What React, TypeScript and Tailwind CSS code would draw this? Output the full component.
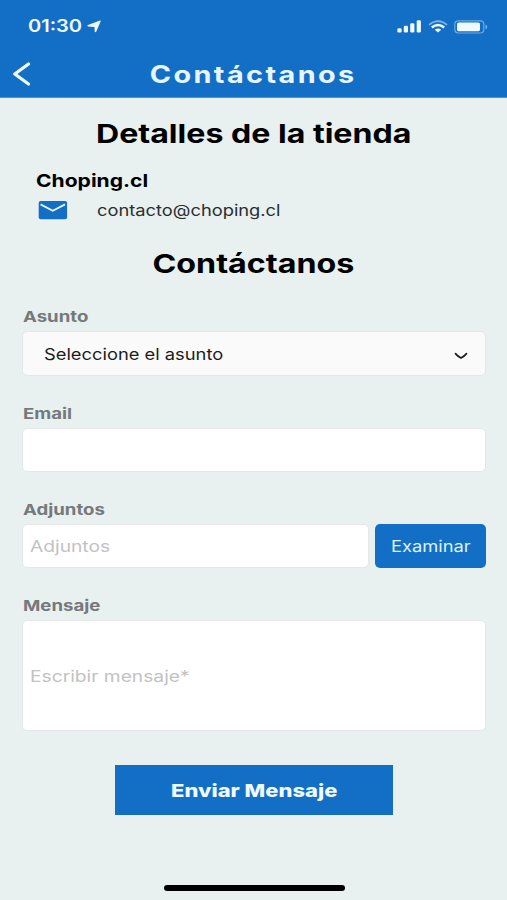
import React from 'react';

interface WideProps {
  children: React.ReactNode;
  className?: string;
}

// Text in the app's extended sans face
const Wide: React.FC<WideProps> = ({ children, className = 'origin-left scale-x-[1.2]' }) => (
  <span className={`inline-block whitespace-nowrap ${className}`}>{children}</span>
);

const StatusBar: React.FC = () => (
  <div className="flex h-[53px] items-center pl-7 pr-[19px] text-[#eefaff]">
    <div className="w-[59px] pt-px text-[17px] font-semibold">
      <Wide className="origin-left scale-x-[1.18]">01:30</Wide>
    </div>
    <svg className="h-[13px] w-[15px]" viewBox="0 0 15 13" fill="currentColor">
      <path d="M13 0.4 Q14 0.3 13.6 1.4 L9.2 11.8 Q8.2 12.8 7.7 11.5 L7.5 6.9 L1 6.4 Q-0.2 5.8 1 5.1 Z" />
    </svg>

    <div className="ml-auto flex items-center">
      <svg className="h-[13px] w-6" viewBox="0 0 24 13" fill="currentColor">
        <rect x="0.4" y="8.2" width="4.2" height="4.3" rx="1.2" />
        <rect x="6.8" y="5.8" width="4.2" height="6.7" rx="1.2" />
        <rect x="13.2" y="3.2" width="4.2" height="9.3" rx="1.2" />
        <rect x="19.7" y="0.3" width="4.2" height="12.2" rx="1.2" />
      </svg>
      <svg className="ml-[7px] h-[13px] w-5" viewBox="0 0 20 13" fill="none" stroke="currentColor">
        <path d="M1 4.8 Q10 -2.6 19 4.8" strokeWidth="1.6" opacity="0.5" />
        <path d="M3.8 7.4 Q10 2.6 16.2 7.4" strokeWidth="2.5" />
        <path d="M6.8 9.8 Q10 7.2 13.2 9.8 L10 12.6 Z" fill="currentColor" stroke="none" />
      </svg>
      <svg className="ml-[6px] h-[14px] w-[34px]" viewBox="0 0 34 14" fill="none">
        <rect x="0.8" y="0.8" width="29" height="12.2" rx="3.4" stroke="#6fa7df" strokeWidth="1.2" />
        <rect x="3" y="2.6" width="23" height="8.6" rx="1.6" fill="currentColor" />
        <path d="M31.4 4.6 Q33.4 5.2 33.4 6.9 Q33.4 8.6 31.4 9.2 Z" fill="#6fa7df" />
      </svg>
    </div>
  </div>
);

const Header: React.FC = () => (
  <header className="h-[98px] border-b border-[#4c91d3] bg-[#136fc6]">
    <StatusBar />
    <div className="flex h-[42px] items-center pl-3">
      <svg className="h-6 w-[19px]" viewBox="0 0 19 24" fill="none" stroke="#eefaff" strokeWidth="3.2" strokeLinecap="round" strokeLinejoin="round">
        <path d="M16.5 2 L2.8 12 L16.5 22" />
      </svg>
      <h1 className="flex-1 pr-[31px] pt-px text-center text-[24px] font-bold leading-none text-[#e6f6ff]">
        <Wide className="scale-x-[1.2] tracking-[2px]">Contáctanos</Wide>
      </h1>
    </div>
  </header>
);

const Label: React.FC<WideProps> = ({ children }) => (
  <div className="flex h-[30px] items-center pl-px pt-[2px] text-[15px] font-bold text-[#75797b]">
    <Wide className="origin-left scale-x-[1.24]">{children}</Wide>
  </div>
);

const boxStyle = 'flex items-center rounded-[5px] border border-[#e4e7e8] text-[16px]';

export const ContactForm: React.FC = () => (
  <form className="pl-[22px] pr-[21px] pt-[3px]">
    <Label>Asunto</Label>
    <div className={`${boxStyle} mb-[22px] h-[45px] w-[464px] justify-between bg-[#fafafa] pl-[21px] pr-[17px] text-[#1c1c1c]`}>
      <Wide className="origin-left scale-x-[1.145]">Seleccione el asunto</Wide>
      <svg className="mt-1 h-2 w-[14px]" viewBox="0 0 14 8" fill="none" stroke="#1c1c1c" strokeWidth="1.7" strokeLinecap="round">
        <path d="M1.5 1.6 Q4 4.6 7 6 Q10 4.6 12.5 1.6" />
      </svg>
    </div>

    <Label>Email</Label>
    <div className={`${boxStyle} mb-[22px] h-11 w-[464px] bg-white`} />

    <Label>Adjuntos</Label>
    <div className="mb-[22px] flex gap-[6px]">
      <div className={`${boxStyle} h-11 w-[347px] bg-white pl-[7px] text-[#c2c2c2]`}>
        <Wide>Adjuntos</Wide>
      </div>
      <button type="button" className="h-11 w-[111px] rounded-[5px] bg-[#136fc6] text-[16px] text-[#dff2ff]">
        <Wide className="scale-x-[1.145]">Examinar</Wide>
      </button>
    </div>

    <Label>Mensaje</Label>
    <div className={`${boxStyle} h-[111px] w-[464px] bg-white pl-[7px] text-[#c2c2c2]`}>
      <Wide>Escribir mensaje*</Wide>
    </div>

    <button type="button" className="ml-[93px] mt-[34px] block h-[50px] w-[278px] bg-[#136fc6] text-[18px] font-extrabold text-[#eefaff]">
      <Wide className="scale-x-[1.22]">Enviar Mensaje</Wide>
    </button>
  </form>
);

const App: React.FC = () => (
  <div className="flex h-[900px] w-[507px] flex-col overflow-hidden bg-[#e8f0f0] font-['Inter',sans-serif]">
    <Header />

    <h2 className="flex h-[70px] items-center justify-center text-[26px] font-bold text-black">
      <Wide className="scale-x-[1.235]">Detalles de la tienda</Wide>
    </h2>
    <div className="flex h-6 items-center pl-9 text-[18px] font-bold text-black">
      <Wide className="origin-left scale-x-[1.17]">Choping.cl</Wide>
    </div>
    <div className="flex h-9 items-center pl-[38px] text-[15.5px] text-[#2a2d2e]">
      <svg className="mr-[29px] h-[19px] w-[30px]" viewBox="0 0 30 19">
        <rect x="0.7" y="0.1" width="28.4" height="18.2" rx="2" fill="#136fc6" />
        <path d="M2.6 3.4 L14.8 9.8 L27 3.4" fill="none" stroke="#e8f4fb" strokeWidth="1.8" />
      </svg>
      <Wide className="origin-left scale-x-[1.18] pt-px">contacto@choping.cl</Wide>
    </div>

    <h2 className="flex h-[70px] items-center justify-center text-[26px] font-bold text-black">
      <Wide className="scale-x-[1.24]">Contáctanos</Wide>
    </h2>
    <ContactForm />

    {/* Home indicator */}
    <div className="mb-[9px] ml-[164px] mt-auto h-[6px] w-[181px] rounded-full bg-black" />
  </div>
);

export default App;
